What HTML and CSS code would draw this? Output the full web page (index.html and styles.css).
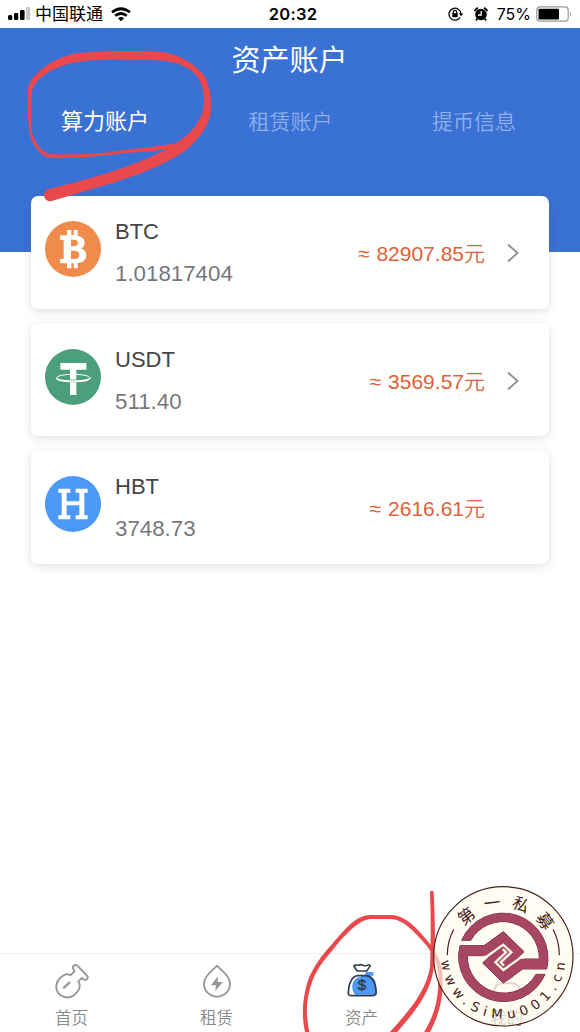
FILE: index.html
```html
<!DOCTYPE html>
<html lang="zh-CN">
<head>
    <meta charset="UTF-8">
    <meta name="viewport" content="width=device-width, initial-scale=1.0">
    <title>资产账户</title>
    <link rel="stylesheet" href="styles.css">
</head>
<body>
    <div class="app">
        <!-- 状态栏 -->
        <div class="status-bar">
            <div class="status-left">
                <svg class="signal" width="23" height="14" viewBox="0 0 23 14">
                    <rect x="0" y="8" width="4.3" height="5" rx="1.5"/>
                    <rect x="6" y="6" width="4.3" height="7" rx="1.3"/>
                    <rect x="12" y="3" width="4.6" height="10" rx="1.2"/>
                    <rect x="18" y="0" width="4.3" height="13" rx="1.2" fill="#c9c9c9"/>
                </svg>
                <span class="carrier">中国联通</span>
                <svg class="wifi" width="20" height="15" viewBox="0 0 20 15" fill="none" stroke="#000" stroke-width="2.7">
                    <path d="M1 5.3Q10-1.8 19 5.3"/>
                    <path d="M4.2 8.8Q10 4.2 15.8 8.8"/>
                    <path d="M7 11.2Q10 9 13 11.2L10 14.2Z" fill="#000" stroke="none"/>
                </svg>
            </div>
            <div class="status-time">20:32</div>
            <div class="status-right">
                <svg width="16" height="14" viewBox="0 0 16 14" fill="none" stroke="#000" stroke-width="1.3">
                    <path d="M12.2 10.2A6 6 0 1 1 13 7"/>
                    <path d="M10.9 6.6H15.3L13.1 9.2Z" fill="#000" stroke="none"/>
                    <rect x="4.3" y="6.2" width="5.4" height="4" fill="#000" stroke="none"/>
                    <path d="M5.3 6.5V5A1.7 1.7 0 0 1 8.7 5V6.5"/>
                </svg>
                <svg class="alarm" width="14" height="14" viewBox="0 0 14 14">
                    <circle cx="7" cy="7.5" r="5.8"/>
                    <path d="M.5 4A9 9 0 0 1 4 .9M10 .9A9 9 0 0 1 13.5 4M3.2 11.8L1.8 13.4M10.8 11.8L12.2 13.4" stroke="#000" stroke-width="1.8" fill="none"/>
                    <path d="M7.2 4V8H4" stroke="#fff" stroke-width="1.3" fill="none"/>
                </svg>
                <span class="battery-text">75%</span>
                <svg width="36" height="16" viewBox="0 0 36 16">
                    <rect x=".8" y=".8" width="31.4" height="14.4" rx="3.5" fill="#fff" stroke="#999" stroke-width="1.2"/>
                    <rect x="2.5" y="2.8" width="20.5" height="10.6" rx="1"/>
                    <path d="M34 5.2Q36 8 34 10.8Z" fill="#999"/>
                </svg>
            </div>
        </div>

        <!-- 标题与账户切换 -->
        <div class="header">
            <h1>资产账户</h1>
            <div class="tabs">
                <div class="tab active">算力账户</div>
                <div class="tab">租赁账户</div>
                <div class="tab">提币信息</div>
            </div>
        </div>

        <!-- 资产列表 -->
        <div class="asset-list">
            <div class="asset-card">
                <svg class="coin" viewBox="0 0 168 168">
                    <circle cx="84" cy="84" r="84" fill="#f08b4b"/>
                    <path d="M66 27H79V43H86V27H98V44Q119 48 119 65Q119 77 108 82Q124 88 124 104Q124 122 98 126V142H86V127H79V142H66V127H45V114H56V56H45V43H66ZM78 56V76H88Q99 75 99 66T88 56ZM78 89V114H90Q103 113 103 102T90 89Z" fill="#fff" fill-rule="evenodd"/>
                </svg>
                <div class="asset-info">
                    <div class="asset-name">BTC</div>
                    <div class="asset-amount">1.01817404</div>
                </div>
                <div class="asset-value"><span class="approx">≈</span>82907.85元</div>
                <svg class="arrow" viewBox="0 0 12 20"><path d="M1 1.5L10.5 10L1 18.5"/></svg>
            </div>
            <div class="asset-card">
                <svg class="coin" viewBox="0 0 168 168">
                    <circle cx="84" cy="84" r="84" fill="#4b9f7c"/>
                    <path d="M46 42H124V62H94V138H75V62H46Z" fill="#fff"/>
                    <path d="M73 92H96V100H73Z" fill="#4b9f7c"/>
                    <ellipse cx="85" cy="86" rx="50" ry="10" fill="none" stroke="#fff" stroke-width="3"/>
                    <path d="M35 87C38 101 132 101 135 87" fill="none" stroke="#fff" stroke-width="4"/>
                </svg>
                <div class="asset-info">
                    <div class="asset-name">USDT</div>
                    <div class="asset-amount">511.40</div>
                </div>
                <div class="asset-value"><span class="approx">≈</span>3569.57元</div>
                <svg class="arrow" viewBox="0 0 12 20"><path d="M1 1.5L10.5 10L1 18.5"/></svg>
            </div>
            <div class="asset-card">
                <svg class="coin" viewBox="0 0 168 168">
                    <circle cx="84" cy="84" r="84" fill="#4b98f7"/>
                    <path d="M40 38H76V50H65V76H103V50H92V38H128V50H118V118H128V130H92V118H103V88H65V118H76V130H40V118H50V50H40Z" fill="#fff"/>
                </svg>
                <div class="asset-info">
                    <div class="asset-name">HBT</div>
                    <div class="asset-amount">3748.73</div>
                </div>
                <div class="asset-value"><span class="approx">≈</span>2616.61元</div>
                <div class="arrow"></div>
            </div>
        </div>

        <!-- 底部导航 -->
        <div class="bottom-nav">
            <div class="nav-item">
                <svg class="nav-icon" viewBox="0 0 108 108" fill="none" stroke="#979797" stroke-width="5.5" stroke-linejoin="round" stroke-linecap="round">
                    <path d="M57 14C54 4 64 0 71 6L99 35C105 42 99 50 89 47L84 42L73 52C81 65 78 75 68 86C53 102 35 104 20 94C4 82 3 62 14 47C27 32 38 26 49 34L62 21Z"/>
                    <path d="M30 71L46 56" stroke-width="7"/>
                </svg>
                <span>首页</span>
            </div>
            <div class="nav-item">
                <svg class="nav-icon" viewBox="0 0 108 108" fill="none" stroke="#979797" stroke-width="5.5" stroke-linejoin="round">
                    <path d="M54 5C40 20 15 36 15 60A39 38 0 0 0 93 60C93 36 68 20 54 5Z"/>
                    <path d="M57 37L36 64H51L48 82L72 54H56Z" fill="#979797" stroke="none"/>
                </svg>
                <span>租赁</span>
            </div>
            <div class="nav-item">
                <svg class="nav-icon" viewBox="0 0 108 108" fill="none" stroke="#303b4b" stroke-width="5" stroke-linejoin="round">
                    <path d="M66 24H88V35H80L94 50L99 92H34C19 78 22 42 49 39L63 33Z" fill="#4b98f7" stroke="none"/>
                    <path d="M34 3C42 8 46 -1 54 3S66 6 74 3C82 2 78 8 68 21H40C34 13 25 4 34 3Z" fill="#fff"/>
                    <path d="M42 35H66C87 36 98 65 96 88Q94 95 85 95H23Q12 95 13 86C14 58 24 36 42 35Z"/>
                    <text x="54" y="78" text-anchor="middle" class="bag-sign">$</text>
                </svg>
                <span>资产</span>
            </div>
            <div class="nav-item">
                <svg class="nav-icon" viewBox="0 0 108 108" fill="none" stroke="#979797" stroke-width="6">
                    <circle cx="54" cy="26" r="21"/>
                    <path d="M15 89V82Q18 58 42 58H68Q91 58 93 82V89Q93 94 86 94H22Q15 94 15 89Z"/>
                </svg>
                <span>我的</span>
            </div>
        </div>

        <!-- 手绘标注 -->
        <svg class="marks" viewBox="0 0 580 1032" fill="#e9484c">
            <g transform="translate(0 30) scale(.33333)">
                <path d="M145 478C270 445 390 414 490 362C505 355 512 350 519 345C580 310 612 262 612 215C612 160 594 122 535 102C500 88 450 89 370 89C300 88 245 92 205 102C165 112 98 145 96 190C93 230 94 260 95 295C98 335 128 368 148 373C230 376 310 370 380 359C430 356 475 347 514 342A6 6 0 0 1 517 354C460 365 420 366 370 370C300 380 220 386 145 384C122 376 90 340 88 300C81 260 82 220 84 180C85 152 108 132 125 118C155 94 190 78 230 70C300 62 410 62 480 65C540 72 590 105 615 140C630 172 636 210 633 240C630 285 600 320 570 350C510 401 400 440 320 464L155 513A18 18 0 0 1 145 478Z"/>
            </g>
            <g transform="translate(290 880) scale(.33333)">
                <path d="M420 35Q427 29 431 36C434 100 437 180 433 245C430 330 375 395 320 458H298C360 390 410 330 420 260C423 180 423 110 420 35Z"/>
                <path d="M46 460C32 400 40 350 52 307C70 250 115 205 145 170C180 130 205 106 240 105H305C350 108 385 148 420 192C445 225 460 260 458 310C458 370 440 420 418 460H400C430 410 443 370 445 310C448 265 435 230 410 197C370 151 340 120 305 117H240C215 120 190 140 155 177C125 215 80 260 66 307C48 355 46 405 59 460Z"/>
            </g>
        </svg>

        <!-- 印章 -->
        <svg class="seal" viewBox="0 0 465 465">
            <defs>
                <path id="arcTop" d="M90 238A145 145 0 0 1 380 238"/>
                <path id="arcBottom" d="M48 238A187 187 0 0 0 422 238"/>
                <path id="sealHalf" d="M-125 -51A135 135 0 0 1 130 35H58L0 77L-62 17L-4 -38L30 5H108A110 110 0 0 0 -98 -51Z"/>
                <path id="sealLine" d="M-60 -1H-52L0 -38L24 -15L-8 15L2 25"/>
            </defs>
            <circle cx="235" cy="238" r="209" fill="#fffbea" fill-opacity=".66" stroke="#46221b" stroke-width="3.5"/>
            <path d="M67 235A168 168 0 0 1 86 157M384 157A168 168 0 0 1 403 235" fill="none" stroke="#46221b" stroke-width="3.5"/>
            <g transform="translate(235 241)">
                <g class="seal-edge">
                    <use href="#sealHalf"/>
                    <use href="#sealHalf" transform="rotate(180)"/>
                </g>
                <g class="seal-mark">
                    <use href="#sealHalf"/>
                    <use href="#sealHalf" transform="rotate(180)"/>
                </g>
                <g class="seal-line">
                    <use href="#sealLine"/>
                    <use href="#sealLine" transform="rotate(180)"/>
                </g>
            </g>
            <text class="seal-name"><textPath href="#arcTop" startOffset="54.7%" text-anchor="middle">第一私募</textPath></text>
            <text class="seal-url"><textPath href="#arcBottom" startOffset="51%" text-anchor="middle">www.SiMu001.cn</textPath></text>
        </svg>
    </div>
</body>
</html>
```

FILE: styles.css
```css
* {
    box-sizing: border-box;
}

body {
    margin: 0;
    font-family: "Liberation Sans", "Noto Sans CJK SC", sans-serif;
    background: #fff;
}

.app {
    position: relative;
    width: 580px;
    height: 1032px;
    display: flex;
    flex-direction: column;
    overflow: hidden;
}

/* 状态栏 */
.status-bar {
    height: 28px;
    padding: 0 8px;
    display: grid;
    grid-template-columns: 1fr auto 1fr;
    align-items: center;
    color: #000;
    line-height: 28px;
}

.status-left,
.status-right {
    display: flex;
    align-items: center;
}

.carrier {
    font-size: 17px;
    line-height: 26px;
    padding-top: 2px;
    margin: 0 8px 0 4px;
}

.status-time {
    font-family: Inter, sans-serif;
    font-size: 16.5px;
    font-weight: 600;
    letter-spacing: 0.3px;
    padding: 0 0 0 6px;
}

.status-right {
    justify-content: flex-end;
}

.alarm {
    margin: 0 9px 0 10px;
}

.battery-text {
    font-family: Inter, sans-serif;
    font-size: 16px;
    line-height: 26px;
    margin-right: 5px;
}

/* 头部 */
.header {
    height: 224px;
    flex-shrink: 0;
    background: #3a71d4;
    color: #fff;
}

.header h1 {
    margin: 0;
    padding: 12px 1px 0 0;
    font-size: 29px;
    font-weight: 400;
    line-height: 42px;
    text-align: center;
}

.tabs {
    display: flex;
    justify-content: space-between;
    padding: 24px 64px 0 61px;
    line-height: 32px;
    align-items: center;
}

.tab {
    font-size: 21px;
    font-weight: 350;
    color: #8fb0ea;
}

.tab.active {
    font-size: 22px;
    font-weight: 400;
    color: #fff;
}

/* 资产卡片 */
.asset-list {
    flex: 1;
    display: flex;
    flex-direction: column;
    gap: 15px;
    margin-top: -56px;
    padding: 0 31px;
}

.asset-card {
    display: flex;
    align-items: flex-start;
    height: 112.6px;
    padding: 25px 30px 0 14px;
    border-radius: 7px;
    background: #fff;
    box-shadow: 0 2px 10px rgba(60, 60, 110, 0.17);
}

.coin {
    width: 56px;
    height: 56px;
}

.asset-info {
    margin: -5px 0 0 14px;
    font-size: 22.3px;
    line-height: 32px;
}

.asset-name {
    font-size: 22px;
    color: #444;
}

.asset-amount {
    margin-top: 10px;
    color: #77777b;
}

.asset-value {
    margin-left: auto;
    padding-top: 17px;
    font-size: 21px;
    line-height: 32px;
    font-weight: 350;
    color: #e06137;
}

.approx {
    margin-right: 7px;
}

.arrow {
    width: 12px;
    height: 20px;
    margin: 22px 0 0 22px;
    fill: none;
    stroke: #8c8c8f;
    stroke-width: 1.7;
}

/* 底部导航 */
.bottom-nav {
    display: flex;
    height: 79px;
    flex-shrink: 0;
    border-top: 1px solid #eee;
}

.nav-item {
    flex: 1;
    display: flex;
    flex-direction: column;
    align-items: center;
    padding: 10px 2px 0 0;
    font-size: 16.5px;
    font-weight: 350;
    line-height: 26px;
    color: #888;
}

.nav-icon {
    width: 36px;
    height: 36px;
    margin-bottom: 5px;
    overflow: visible;
}

.bag-sign {
    font-size: 45px;
    font-weight: 400;
    fill: #303b4b;
    stroke: #303b4b;
    stroke-width: 1.5px;
}

/* 标注与印章浮在页面之上 */
.marks {
    position: absolute;
    inset: 0;
    width: 580px;
    height: 1032px;
    pointer-events: none;
}

.seal {
    position: absolute;
    left: 425px;
    top: 877px;
    width: 155px;
    height: 155px;
}

.seal-edge {
    stroke: #7c2a48;
    stroke-width: 3px;
}

.seal-mark {
    fill: #a74662;
}

.seal-line {
    fill: none;
    stroke: #fffbe8;
    stroke-width: 7px;
}

.seal-name {
    font-family: "Noto Sans CJK SC", sans-serif;
    font-size: 50px;
    letter-spacing: 28px;
    fill: #46221b;
}

.seal-url {
    font-family: "DejaVu Sans", sans-serif;
    font-size: 40px;
    letter-spacing: 16.5px;
    fill: #46221b;
}
```
